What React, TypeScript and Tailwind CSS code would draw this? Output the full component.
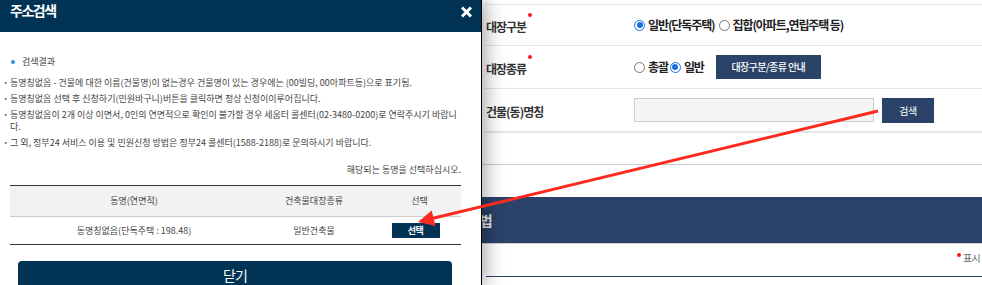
import React from 'react';

const Radio = ({ checked }: { checked?: boolean }) =>
  checked ? (
    <span className="flex h-[11px] w-[11px] shrink-0 items-center justify-center rounded-full border border-[#1a6fe0] bg-white">
      <span className="h-[6px] w-[6px] rounded-full bg-[#1a6fe0]" />
    </span>
  ) : (
    <span className="block h-[11px] w-[11px] shrink-0 rounded-full border border-[#777] bg-white" />
  );

const Label = ({ text, required }: { text: string; required?: boolean }) => (
  <div className="w-[149px] shrink-0 pl-[1px]">
    <span className="relative text-[12px] font-bold leading-[14px] tracking-[-1px] text-[#333]">
      {text}
      {required && <span className="absolute -right-[6px] -top-[5px] h-[4px] w-[4px] rounded-full bg-[#f21b1b]" />}
    </span>
  </div>
);

const notices = [
  '동명칭없음 - 건물에 대한 이름(건물명)이 없는경우 건물명이 있는 경우에는 (00빌딩, 00아파트등)으로 표기됨.',
  '동명칭없음 선택 후 신청하기(민원바구니)버튼을 클릭하면 정상 신청이이루어집니다.',
  '동명칭없음이 2개 이상 이면서, 0인의 연면적으로 확인이 불가할 경우 세움터 콜센터(02-3480-0200)로 연락주시기 바랍니다.',
  '그 외, 정부24 서비스 이용 및 민원신청 방법은 정부24 콜센터(1588-2188)로 문의하시기 바랍니다.',
];

export default function App() {
  return (
    <div className="relative h-[285px] w-[982px] overflow-hidden bg-white font-['Noto_Sans_CJK_KR',sans-serif]">
      {/* page behind the popup */}
      <div className="flex flex-col">
        <div className="pl-[485px] pt-[4px]">
          <div className="border-t border-[#e6e6e6]">
            <div className="flex h-[41px] items-center border-b border-[#e6e6e6]">
              <Label text="대장구분" required />
              <div className="flex items-center text-[12px] font-semibold leading-[14px] tracking-[-1.1px] text-[#222]">
                <Radio checked />
                <span className="ml-[3px]">일반(단독주택)</span>
                <span className="ml-[4px]"><Radio /></span>
                <span className="ml-[3px]">집합(아파트,연립주택 등)</span>
              </div>
            </div>
            <div className="flex h-[43px] items-center border-b border-[#e6e6e6]">
              <Label text="대장종류" required />
              <div className="flex items-center text-[12px] font-semibold leading-[14px] tracking-[-1.1px] text-[#222]">
                <Radio />
                <span className="ml-[3px]">총괄</span>
                <span className="ml-[2px]"><Radio checked /></span>
                <span className="ml-[3px]">일반</span>
                <button className="ml-[12px] h-[24px] w-[105px] bg-[#2b4369] text-[10px] font-medium tracking-[-0.6px] text-white">
                  대장구분/종류 안내
                </button>
              </div>
            </div>
            <div className="flex h-[44px] items-center border-b-2 border-[#e6e6e6]">
              <Label text="건물(동)명칭" />
              <input className="h-[24px] w-[240px] border border-[#cccccc] bg-[#f5f5f5] outline-none" />
              <button className="ml-[8px] h-[25px] w-[52px] bg-[#2b4369] text-[10px] tracking-[-0.5px] text-white">
                검색
              </button>
            </div>
          </div>
        </div>
        <div className="mt-[31px] border-t border-[#cccccc]" />
        <div className="mt-[32px] flex h-[47px] items-center border-b border-[#d0d0d0] bg-[#2b4369] pl-[444px]">
          <span className="text-[14px] font-bold leading-[16px] tracking-[-1px] text-[#e8e8e8]">신청방법</span>
        </div>
        <div className="pl-[486px]">
          <div className="flex h-[33px] items-start whitespace-nowrap border-b border-[#2b4369] pl-[471px] pt-[8px]">
            <span className="mt-[1px] h-[4px] w-[4px] shrink-0 rounded-full bg-[#f21b1b]" />
            <span className="ml-[2px] text-[10px] leading-[12px] tracking-[-0.8px] text-[#666]">표시</span>
          </div>
        </div>
      </div>

      {/* address search popup */}
      <div className="absolute left-0 top-0 z-10 flex h-full w-[482px] flex-col border-r border-black bg-white shadow-[4px_0_18px_rgba(0,0,0,0.35)]">
        <div className="flex h-[32px] shrink-0 items-start justify-between bg-[#003354] pl-[10px] pr-[8px]">
          <span className="pt-[2px] text-[14px] font-bold leading-[16px] tracking-[-1.5px] text-white">주소검색</span>
          <svg width="13" height="12" viewBox="0 0 13 12" className="mt-[6px]">
            <path d="M2 1.5 L11 10.5 M11 1.5 L2 10.5" stroke="white" strokeWidth="3" />
          </svg>
        </div>
        <div className="pl-[10px] pr-[20px] pt-[24px] text-[9px] leading-[12px] text-[#444]">
          <div className="flex items-center pl-[1px]">
            <span className="mr-[7px] h-[4px] w-[4px] rounded-full bg-[#2a8fe0]" />
            <span>검색결과</span>
          </div>
          <ul className="-ml-[7px] mt-[9px] flex flex-col gap-[4px]">
            {notices.map((n) => (
              <li key={n} className="flex">
                <span className="w-[5px] shrink-0 font-bold">·</span>
                <span className="ml-[2px]">{n}</span>
              </li>
            ))}
          </ul>
          <p className="mt-[15px] text-right">해당되는 동명을 선택하십시오.</p>
          <table className="mt-[9px] w-full border-collapse text-center">
            <thead>
              <tr className="h-[31px] border-t border-[#333] bg-[#f2f2f2] text-[#444]">
                <th className="w-[248px] font-normal">동명(연면적)</th>
                <th className="w-[112px] font-normal">건축물대장종류</th>
                <th className="pl-[8px] font-normal">선택</th>
              </tr>
            </thead>
            <tbody>
              <tr className="h-[28px] border-b border-t border-b-[#333] border-t-[#cccccc]">
                <td>동명칭없음(단독주택 : 198.48)</td>
                <td>일반건축물</td>
                <td>
                  <button className="h-[15px] w-[48px] bg-[#003354] text-[9px] font-bold leading-[15px] tracking-[-0.5px] text-white">
                    선택
                  </button>
                </td>
              </tr>
            </tbody>
          </table>
          <button className="ml-[8px] mt-[16px] flex h-[40px] w-[434px] justify-center rounded-[4px] bg-[#003354] pt-[6px] text-[14px] leading-[16px] tracking-[-1px] text-white">
            닫기
          </button>
        </div>
      </div>

      {/* annotation arrow */}
      <svg className="pointer-events-none absolute left-0 top-0 z-20" width="982" height="285">
        <line x1="878" y1="111" x2="430" y2="219" stroke="#ff2a1f" strokeWidth="3" />
        <polygon points="418,222 431.7,210.4 435.5,226" fill="#ff2a1f" />
      </svg>
    </div>
  );
}
